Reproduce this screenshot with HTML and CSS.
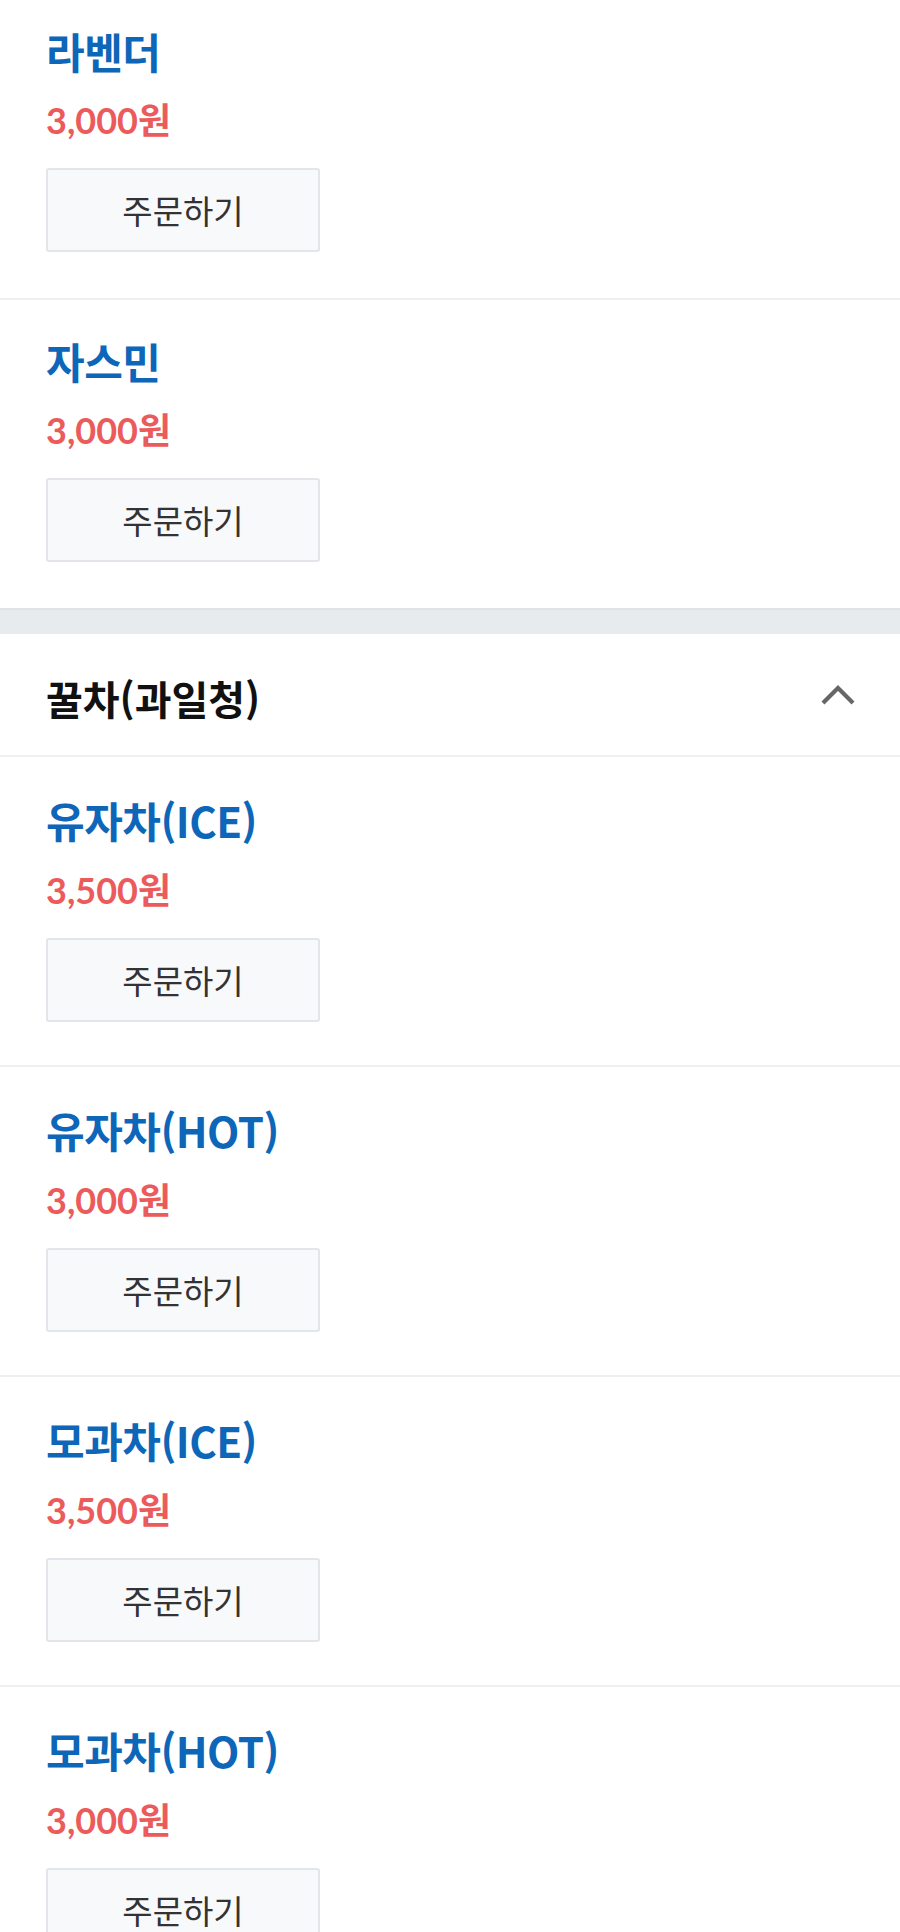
FILE: index.html
```html
<!DOCTYPE html>
<html lang="ko">
<head>
<meta charset="utf-8">
<title>메뉴</title>
<link rel="stylesheet" href="styles.css">
</head>
<body>
<main class="menu">
  <section class="section section--top">
    <ul class="items">
      <li class="item">
        <div class="item-name">라벤더</div>
        <div class="item-price">3,000원</div>
        <button class="order-btn" type="button">주문하기</button>
      </li>
      <li class="item">
        <div class="item-name">자스민</div>
        <div class="item-price">3,000원</div>
        <button class="order-btn" type="button">주문하기</button>
      </li>
    </ul>
  </section>
  <div class="section-gap"></div>
  <section class="section section--open">
    <header class="section-head">
      <h2 class="section-title">꿀차(과일청)</h2>
      <svg class="chevron" width="36" height="24" viewBox="0 0 36 24" aria-hidden="true">
        <polyline points="3,20 18,5 33,20" fill="none" stroke="#666" stroke-width="4.2"/>
      </svg>
    </header>
    <ul class="items">
      <li class="item">
        <div class="item-name">유자차(ICE)</div>
        <div class="item-price">3,500원</div>
        <button class="order-btn" type="button">주문하기</button>
      </li>
      <li class="item">
        <div class="item-name">유자차(HOT)</div>
        <div class="item-price">3,000원</div>
        <button class="order-btn" type="button">주문하기</button>
      </li>
      <li class="item">
        <div class="item-name">모과차(ICE)</div>
        <div class="item-price">3,500원</div>
        <button class="order-btn" type="button">주문하기</button>
      </li>
      <li class="item">
        <div class="item-name">모과차(HOT)</div>
        <div class="item-price">3,000원</div>
        <button class="order-btn" type="button">주문하기</button>
      </li>
    </ul>
  </section>
</main>
</body>
</html>
```
FILE: styles.css
```css
* { box-sizing: border-box; }
html, body {
  margin: 0;
  padding: 0;
  background: #ffffff;
  font-family: "Noto Sans CJK KR", "Noto Sans", sans-serif;
}
.menu { width: 900px; }
.items { list-style: none; margin: 0; padding: 0; }
.item {
  display: flex;
  flex-direction: column;
  align-items: flex-start;
  padding: 36px 46px 46px;
  border-bottom: 2px solid #eeeff1;
}
.section--top .item:first-child { padding-top: 26px; }
.section--top .item:last-child { border-bottom: none; }
.section--open .item { padding-top: 38px; padding-bottom: 43px; }
.section--open .item-price { margin-top: 23px; }
.item-name {
  font-family: "Noto Sans CJK KR", sans-serif;
  font-size: 42px;
  line-height: 50px;
  font-weight: 700;
  color: #0d66b8;
  letter-spacing: -0.5px;
}
.item-price {
  margin-top: 22px;
  font-family: "Lato", "Noto Sans CJK KR", sans-serif;
  font-size: 36px;
  line-height: 44px;
  font-weight: 700;
  color: #ec5b5b;
}
.order-btn {
  margin-top: 26px;
  width: 274px;
  height: 84px;
  padding: 0;
  background: #f8f9fb;
  border: 2px solid #e2e5e9;
  border-radius: 3px;
  font-family: "Noto Sans CJK KR", sans-serif;
  font-size: 33px;
  color: #333333;
}
.section-gap {
  height: 26px;
  background: #e8ebee;
  border-top: 2px solid #dfe2e6;
}
.section-head {
  display: flex;
  align-items: center;
  justify-content: space-between;
  height: 123px;
  padding: 0 44px 0 46px;
  border-bottom: 2px solid #eeeff1;
}
.section-title {
  margin: 0;
  padding-top: 6px;
  font-size: 40px;
  line-height: 50px;
  font-weight: 700;
  color: #111111;
}
.chevron { display: block; }
```
